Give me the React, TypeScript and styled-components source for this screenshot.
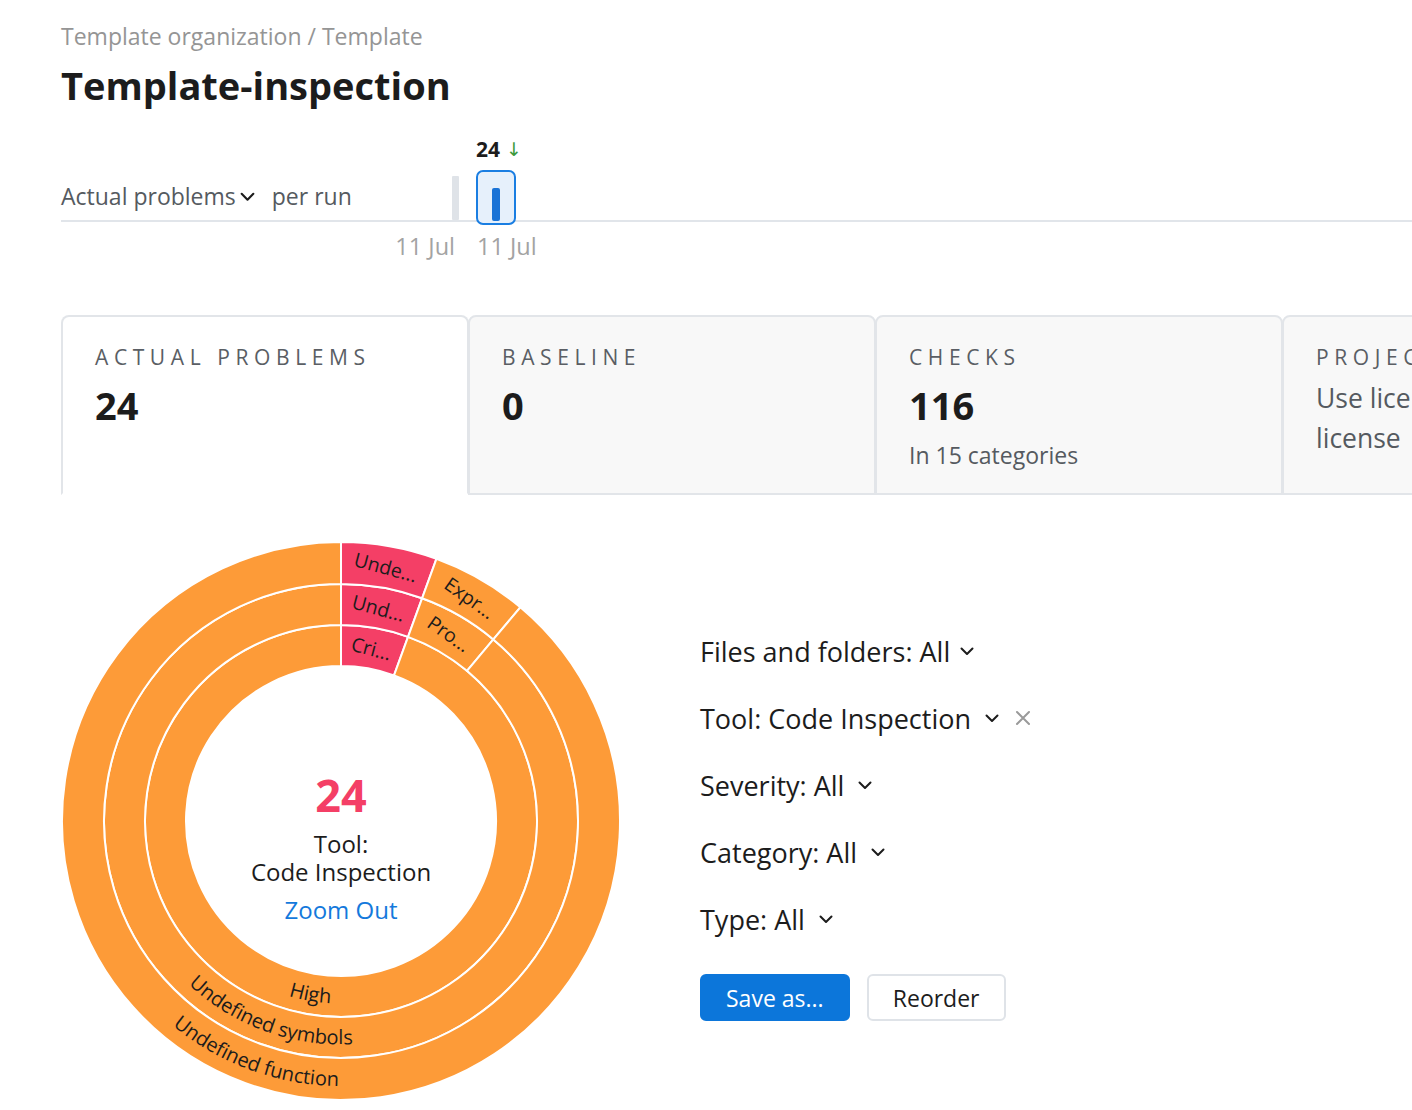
import React from 'react';
import styled, { createGlobalStyle } from 'styled-components';

const FONT = `"Open Sans", "Noto Sans", "DejaVu Sans", sans-serif`;
const PINK = '#f43f66';
const ORANGE = '#fd9b38';

const Global = createGlobalStyle`
  html, body { margin: 0; padding: 0; overflow: hidden; background: #fff; }
  body { font-family: ${FONT}; color: #1f1f1f; }
  #root { width: 1412px; height: 1110px; overflow: hidden; }
`;

const Page = styled.div`
  box-sizing: border-box;
  width: 1412px;
  padding: 18px 0 0 61px;
  overflow: hidden;
`;

const Breadcrumb = styled.div`
  font-size: 23px;
  line-height: 36px;
  color: #959595;
  white-space: nowrap;
`;

const Title = styled.h1`
  margin: 7px 0 0;
  font-size: 38px;
  line-height: 48px;
  font-weight: 700;
  color: #1c1c1c;
`;

const Trend = styled.div`
  margin-top: 26px;
  display: grid;
  grid-template-columns: 391px 7px 17px 40px 1fr;
  grid-template-rows: 28px 55px 28px;
  row-gap: 7px;
`;

const TrendValue = styled.div`
  grid-column: 4;
  grid-row: 1;
  justify-self: start;
  white-space: nowrap;
  font-size: 21px;
  line-height: 28px;
  font-weight: 700;
  color: #1c1c1c;
  display: flex;
  align-items: center;
  gap: 6px;
`;

const Arrow = styled.span`
  color: #3c9a3c;
  font-weight: 400;
  font-size: 19px;
`;

const Baseline = styled.div`
  grid-column: 1 / -1;
  grid-row: 2;
  align-self: end;
  height: 2px;
  margin-bottom: 3px;
  background: #e1e5ea;
`;

const MetricSelect = styled.div`
  grid-column: 1;
  grid-row: 2;
  align-self: center;
  margin-top: -3px;
  display: flex;
  align-items: center;
  font-size: 23px;
  color: #555a60;
  white-space: nowrap;
`;

const PerRun = styled.span`
  margin-left: 16px;
`;

const GhostBar = styled.div`
  grid-column: 2;
  grid-row: 2;
  align-self: end;
  height: 44px;
  margin-bottom: 5px;
  background: #dfe3e8;
  border-radius: 1px;
`;

const SelectedBar = styled.div`
  grid-column: 4;
  grid-row: 2;
  box-sizing: border-box;
  border: 2px solid #1a7ee2;
  border-radius: 7px;
  background: #e6f0fb;
  display: flex;
  justify-content: center;
  align-items: flex-end;
  padding-bottom: 2px;
`;

const BarFill = styled.div<{ $h: number }>`
  width: 8px;
  height: ${(p) => p.$h}px;
  background: #1a73d6;
  border-radius: 2px;
`;

const DateLabel = styled.div<{ $col: number; $align: 'start' | 'end' }>`
  grid-column: ${(p) => p.$col};
  grid-row: 3;
  justify-self: ${(p) => p.$align};
  white-space: nowrap;
  font-size: 23.5px;
  line-height: 28px;
  color: #a3a3a3;
  margin-right: ${(p) => (p.$align === 'end' ? '4px' : '0')};
  margin-left: ${(p) => (p.$align === 'start' ? '1px' : '0')};
`;

const Cards = styled.div`
  margin-top: 55px;
  display: flex;
  width: 1800px;
`;

const Card = styled.div<{ $active?: boolean }>`
  flex: 0 0 408px;
  box-sizing: border-box;
  height: 180px;
  padding: 25px 30px 0 32px;
  border: 2px solid #e2e5e9;
  border-bottom: ${(p) => (p.$active ? '2px solid transparent' : '2px solid #e2e5e9')};
  border-radius: 8px 8px 0 0;
  background: ${(p) => (p.$active ? '#ffffff' : '#f8f8f8')};
  & + & {
    margin-left: -1px;
  }
`;

const CardLabel = styled.div`
  font-size: 21px;
  line-height: 30px;
  letter-spacing: 5.6px;
  color: #5a5e64;
  text-transform: uppercase;
  white-space: nowrap;
`;

const CardValue = styled.div`
  margin-top: 9px;
  font-size: 38px;
  line-height: 48px;
  font-weight: 700;
  color: #1c1c1c;
`;

const CardSub = styled.div`
  margin-top: 11px;
  font-size: 23px;
  line-height: 30px;
  color: #555a60;
`;

const CardText = styled.div`
  margin-top: 6px;
  font-size: 26.5px;
  line-height: 40px;
  color: #555a60;
  white-space: nowrap;
`;

const Main = styled.div`
  margin-top: 46px;
  display: flex;
  align-items: flex-start;
  gap: 79px;
`;

const ChartWrap = styled.div`
  display: grid;
  width: 560px;
  height: 560px;
  & > * {
    grid-area: 1 / 1;
  }
`;

const CenterLabel = styled.div`
  align-self: center;
  justify-self: center;
  margin-top: 52px;
  display: flex;
  flex-direction: column;
  align-items: center;
  text-align: center;
`;

const CenterCount = styled.div`
  font-size: 45px;
  line-height: 48px;
  font-weight: 700;
  color: ${PINK};
`;

const CenterText = styled.div`
  margin-top: 11px;
  font-size: 24px;
  line-height: 28px;
  color: #1c1c1c;
`;

const ZoomLink = styled.a`
  margin-top: 10px;
  font-size: 24px;
  line-height: 28px;
  color: #1479dc;
  text-decoration: none;
  cursor: pointer;
`;

const Filters = styled.div`
  padding-top: 92px;
  display: flex;
  flex-direction: column;
  gap: 31px;
`;

const FilterRow = styled.div`
  display: flex;
  align-items: center;
  height: 36px;
  font-size: 27px;
  color: #1c1c1c;
  white-space: nowrap;
`;

const Chevron = styled.svg<{ $gap: number }>`
  margin-left: ${(p) => p.$gap}px;
  flex: none;
`;

const ClearIcon = styled.svg`
  margin-left: 14px;
  flex: none;
`;

const Buttons = styled.div`
  margin-top: 6px;
  display: flex;
  gap: 17px;
`;

const Button = styled.button<{ $primary?: boolean }>`
  box-sizing: border-box;
  height: 47px;
  padding: 0 24px;
  min-width: ${(p) => (p.$primary ? '149px' : '139px')};
  font-family: ${FONT};
  font-size: 23px;
  border-radius: 6px;
  border: 2px solid ${(p) => (p.$primary ? '#0c76da' : '#dfe3e8')};
  background: ${(p) => (p.$primary ? '#0c76da' : '#ffffff')};
  color: ${(p) => (p.$primary ? '#ffffff' : '#1c1c1c')};
  cursor: pointer;
`;

const ChevronDown = ({ gap = 10, size = 16 }: { gap?: number; size?: number }) => (
  <Chevron $gap={gap} width={size} height={size} viewBox="0 0 16 16">
    <polyline points="2.5,5.5 8,11 13.5,5.5" fill="none" stroke="#1c1c1c" strokeWidth="2" strokeLinecap="round" strokeLinejoin="round" />
  </Chevron>
);

/* ---------- Sunburst ---------- */
const CX = 280;
const CY = 280;
const pt = (r: number, deg: number): [number, number] => {
  const a = (deg * Math.PI) / 180;
  return [CX + r * Math.sin(a), CY - r * Math.cos(a)];
};
const arcPath = (r0: number, r1: number, a0: number, a1: number) => {
  const large = a1 - a0 > 180 ? 1 : 0;
  const [x0, y0] = pt(r1, a0);
  const [x1, y1] = pt(r1, a1);
  const [x2, y2] = pt(r0, a1);
  const [x3, y3] = pt(r0, a0);
  return `M${x0} ${y0} A${r1} ${r1} 0 ${large} 1 ${x1} ${y1} L${x2} ${y2} A${r0} ${r0} 0 ${large} 0 ${x3} ${y3} Z`;
};
const textArc = (r: number, mid: number) => {
  const [x0, y0] = pt(r, mid + 89);
  const [x1, y1] = pt(r, mid - 89);
  return `M${x0} ${y0} A${r} ${r} 0 0 0 ${x1} ${y1}`;
};

type Seg = { a0: number; a1: number; color: string; label: string; curved?: boolean };
const RINGS: { r0: number; r1: number; segs: Seg[] }[] = [
  {
    r0: 155,
    r1: 196,
    segs: [
      { a0: 0, a1: 20, color: PINK, label: 'Cri...' },
      { a0: 20, a1: 360, color: ORANGE, label: 'High', curved: true },
    ],
  },
  {
    r0: 196,
    r1: 237,
    segs: [
      { a0: 0, a1: 20, color: PINK, label: 'Und...' },
      { a0: 20, a1: 40, color: ORANGE, label: 'Pro...' },
      { a0: 40, a1: 360, color: ORANGE, label: 'Undefined symbols', curved: true },
    ],
  },
  {
    r0: 237,
    r1: 279,
    segs: [
      { a0: 0, a1: 20, color: PINK, label: 'Unde...' },
      { a0: 20, a1: 40, color: ORANGE, label: 'Expr...' },
      { a0: 40, a1: 360, color: ORANGE, label: 'Undefined function', curved: true },
    ],
  },
];

const Sunburst = () => (
  <svg width="560" height="560" viewBox="0 0 560 560">
    {RINGS.map((ring, ri) =>
      ring.segs.map((s, si) => (
        <path
          key={`p${ri}-${si}`}
          d={arcPath(ring.r0, ring.r1, s.a0, s.a1 - 0.0001)}
          fill={s.color}
          stroke="#fff"
          strokeWidth="2"
        />
      ))
    )}
    <defs>
      {RINGS.map((ring, ri) =>
        ring.segs
          .filter((s) => s.curved)
          .map((s, si) => (
            <path key={`d${ri}-${si}`} id={`arc-${ri}`} d={textArc((ring.r0 + ring.r1) / 2 + 7, (s.a0 + s.a1) / 2)} />
          ))
      )}
    </defs>
    {RINGS.map((ring, ri) =>
      ring.segs.map((s, si) => {
        const mid = (s.a0 + s.a1) / 2;
        if (s.curved) {
          return (
            <text key={`t${ri}-${si}`} fontFamily={FONT} fontSize="20" fill="#1c1c1c">
              <textPath href={`#arc-${ri}`} startOffset="50%" textAnchor="middle">
                {s.label}
              </textPath>
            </text>
          );
        }
        const [x, y] = pt((ring.r0 + ring.r1) / 2, mid);
        return (
          <text
            key={`t${ri}-${si}`}
            x={x}
            y={y}
            fontFamily={FONT}
            fontSize="19.5"
            fill="#1c1c1c"
            textAnchor="middle"
            dominantBaseline="central"
            transform={`rotate(${mid + 5} ${x} ${y})`}
          >
            {s.label}
          </text>
        );
      })
    )}
  </svg>
);

const filters = ['Files and folders: All', 'Tool: Code Inspection', 'Severity: All', 'Category: All', 'Type: All'];

export default function App() {
  return (
    <>
      <Global />
      <Page>
        <Breadcrumb>Template organization / Template</Breadcrumb>
        <Title>Template-inspection</Title>

        <Trend>
          <TrendValue>
            24<Arrow>↓</Arrow>
          </TrendValue>
          <Baseline />
          <MetricSelect>
            Actual problems
            <ChevronDown gap={3} size={17} />
            <PerRun>per run</PerRun>
          </MetricSelect>
          <GhostBar />
          <SelectedBar>
            <BarFill $h={33} />
          </SelectedBar>
          <DateLabel $col={2} $align="end">11 Jul</DateLabel>
          <DateLabel $col={4} $align="start">11 Jul</DateLabel>
        </Trend>

        <Cards>
          <Card $active>
            <CardLabel>Actual problems</CardLabel>
            <CardValue>24</CardValue>
          </Card>
          <Card>
            <CardLabel>Baseline</CardLabel>
            <CardValue>0</CardValue>
          </Card>
          <Card>
            <CardLabel>Checks</CardLabel>
            <CardValue>116</CardValue>
            <CardSub>In 15 categories</CardSub>
          </Card>
          <Card>
            <CardLabel>Project license</CardLabel>
            <CardText>
              Use license key to run with a
              <br />
              license
            </CardText>
          </Card>
        </Cards>

        <Main>
          <ChartWrap>
            <Sunburst />
            <CenterLabel>
              <CenterCount>24</CenterCount>
              <CenterText>
                Tool:
                <br />
                Code Inspection
              </CenterText>
              <ZoomLink>Zoom Out</ZoomLink>
            </CenterLabel>
          </ChartWrap>

          <Filters>
            {filters.map((f, i) => (
              <FilterRow key={f}>
                {f}
                <ChevronDown gap={i === 0 ? 9 : 13} />
                {i === 1 && (
                  <ClearIcon width="18" height="18" viewBox="0 0 18 18">
                    <path d="M3 3 L15 15 M15 3 L3 15" stroke="#9a9a9a" strokeWidth="2" strokeLinecap="round" />
                  </ClearIcon>
                )}
              </FilterRow>
            ))}
            <Buttons>
              <Button $primary>Save as...</Button>
              <Button>Reorder</Button>
            </Buttons>
          </Filters>
        </Main>
      </Page>
    </>
  );
}
